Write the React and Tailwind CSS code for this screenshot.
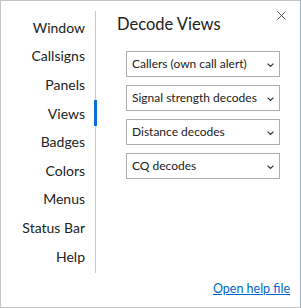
import { X } from 'lucide-react';

const sections = ['Window', 'Callsigns', 'Panels', 'Views', 'Badges', 'Colors', 'Menus', 'Status Bar', 'Help'];
const views = ['Callers (own call alert)', 'Signal strength decodes', 'Distance decodes', 'CQ decodes'];

function Chevron() {
  return (
    <svg width="7" height="4" viewBox="0 0 7 4" className="shrink-0 mt-[2px]">
      <path d="M0.6 0.6 L3.5 3.4 L6.4 0.6" fill="none" stroke="#333" strokeWidth="1.2" />
    </svg>
  );
}

export default function App() {
  return (
    <div
      className="relative flex w-[301px] h-[308px] bg-white border border-[#c4c4c4] border-r-[#9fb0c0] text-[#222]"
      style={{ fontFamily: 'Lato, "Noto Sans", sans-serif' }}
    >
      <nav className="w-[95px] shrink-0 mt-[10px] h-[262px] border-r border-[#c8c8c8] pt-[2px]">
        {sections.map(s => (
          <div key={s} className="relative h-[28.6px] flex items-center justify-end pr-[10px] text-[14px] whitespace-nowrap">
            {s}
            {s === 'Views' && <span className="absolute right-[-2px] top-[1px] w-[3px] h-[26px] bg-[#0a6fd6]" />}
          </div>
        ))}
      </nav>

      <main className="flex-1 flex flex-col pl-[21px] pr-[20px]">
        <h1 className="mt-[11px] text-[16.5px] leading-[24px]">Decode Views</h1>
        <div className="mt-[15px] ml-[9px] flex flex-col gap-[8px]">
          {views.map(v => (
            <div key={v} className="h-[26px] flex items-center justify-between border border-[#adadad] pl-[5px] pr-[5px] text-[12px] whitespace-nowrap">
              <span>{v}</span>
              <Chevron />
            </div>
          ))}
        </div>
        <div className="mt-auto mb-[8px] -mr-[10px] flex justify-end">
          <a href="#" className="text-[12.5px] text-[#0066cc] underline">Open help file</a>
        </div>
      </main>

      <button className="absolute right-[11px] top-[7px] text-[#444]">
        <X size={15} strokeWidth={1.5} />
      </button>
    </div>
  );
}
